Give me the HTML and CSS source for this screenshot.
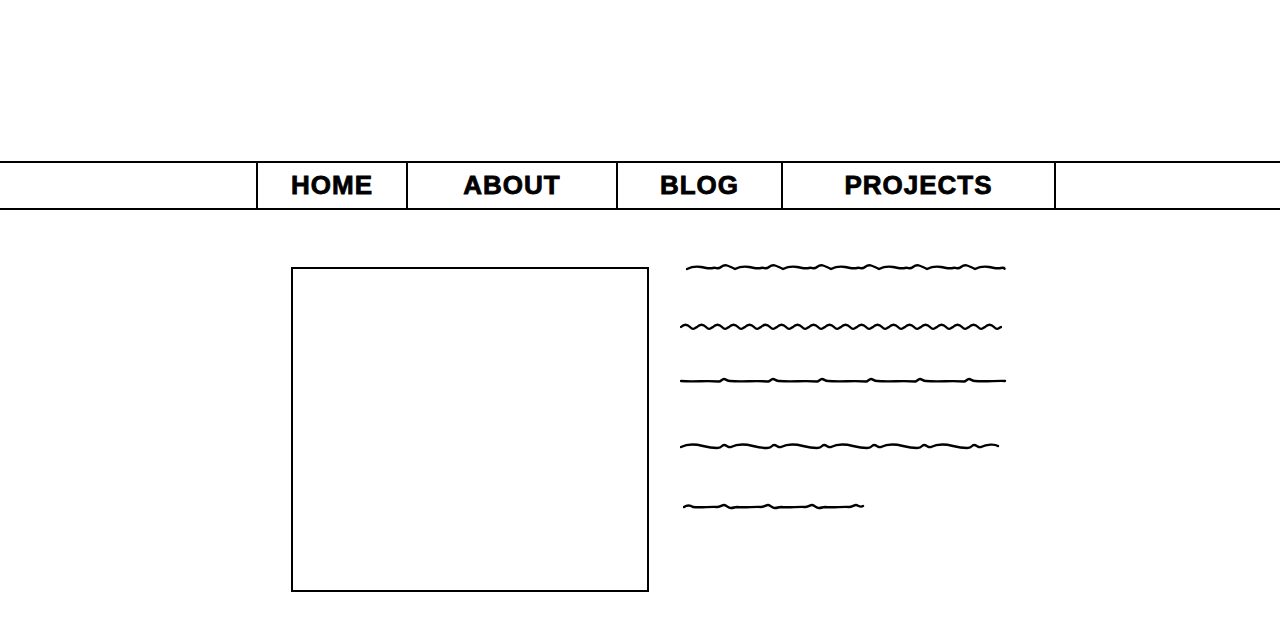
FILE: index.html
```html
<!DOCTYPE html>
<html lang="en">

<head>
    <meta charset="UTF-8">
    <meta name="viewport" content="width=device-width, initial-scale=1.0">
    <title>Wireframe</title>
    <link rel="stylesheet" href="styles.css">
</head>

<body>
    <nav class="navbar">
        <ul class="nav-list">
            <li class="nav-item home">HOME</li>
            <li class="nav-item about">ABOUT</li>
            <li class="nav-item blog">BLOG</li>
            <li class="nav-item projects">PROJECTS</li>
        </ul>
    </nav>

    <main class="content">
        <div class="image-box"></div>

        <!-- placeholder text, drawn as hand-made squiggles -->
        <div class="text-lines">
            <svg class="squiggle line-1" width="320" height="10" viewBox="0 0 320 10">
                <path d="M1 5 c4 -2 8 -3 14 -2 s8 2 12 1 s4 2 8 -1 s6 -2 14 2 c4 -2 8 -3 14 -2 s8 2 12 1 s4 2 8 -1 s6 -2 14 2 c4 -2 8 -3 14 -2 s8 2 12 1 s4 2 8 -1 s6 -2 14 2 c4 -2 8 -3 14 -2 s8 2 12 1 s4 2 8 -1 s6 -2 14 2 c4 -2 8 -3 14 -2 s8 2 12 1 s4 2 8 -1 s6 -2 14 2 c4 -2 8 -3 14 -2 s8 2 12 1 s4 2 8 -1 s6 -2 14 2 c4 -2 8 -3 14 -2 s8 2 12 1 s4 2 3 0" />
            </svg>
            <svg class="squiggle line-2" width="322" height="10" viewBox="0 0 322 10">
                <path d="M1 5 c3 -3 6 -3 9 0 s4 2 7 0 c3 -3 6 -3 9 0 s4 2 7 0 c3 -3 6 -3 9 0 s4 2 7 0 c3 -3 6 -3 9 0 s4 2 7 0 c3 -3 6 -3 9 0 s4 2 7 0 c3 -3 6 -3 9 0 s4 2 7 0 c3 -3 6 -3 9 0 s4 2 7 0 c3 -3 6 -3 9 0 s4 2 7 0 c3 -3 6 -3 9 0 s4 2 7 0 c3 -3 6 -3 9 0 s4 2 7 0 c3 -3 6 -3 9 0 s4 2 7 0 c3 -3 6 -3 9 0 s4 2 7 0 c3 -3 6 -3 9 0 s4 2 7 0 c3 -3 6 -3 9 0 s4 2 7 0 c3 -3 6 -3 9 0 s4 2 7 0 c3 -3 6 -3 9 0 s4 2 7 0 c3 -3 6 -3 9 0 s4 2 7 0 c3 -3 6 -3 9 0 s4 2 7 0 c3 -3 6 -3 9 0 s4 2 7 0 c3 -3 6 -3 9 0 s4 2 7 0" />
            </svg>
            <svg class="squiggle line-3" width="327" height="10" viewBox="0 0 327 10">
                <path d="M1 5 c12 1 26 -0.5 38 0.5 c2 0 3 -2.5 5 -2.5 s3 2 6 2 c12 1 26 -0.5 38 0.5 c2 0 3 -2.5 5 -2.5 s3 2 6 2 c12 1 26 -0.5 38 0.5 c2 0 3 -2.5 5 -2.5 s3 2 6 2 c12 1 26 -0.5 38 0.5 c2 0 3 -2.5 5 -2.5 s3 2 6 2 c12 1 26 -0.5 38 0.5 c2 0 3 -2.5 5 -2.5 s3 2 6 2 c12 1 26 -0.5 38 0.5 c2 0 3 -2.5 5 -2.5 s3 2 6 2 c10 1 22 -0.5 30 0" />
            </svg>
            <svg class="squiggle line-4" width="320" height="10" viewBox="0 0 320 10">
                <path d="M1 5 c6 -3 14 -3 22 -1 s8 2 14 2 s4 -3 7 -3 s4 3 7 2 c6 -3 14 -3 22 -1 s8 2 14 2 s4 -3 7 -3 s4 3 7 2 c6 -3 14 -3 22 -1 s8 2 14 2 s4 -3 7 -3 s4 3 7 2 c6 -3 14 -3 22 -1 s8 2 14 2 s4 -3 7 -3 s4 3 7 2 c6 -3 14 -3 22 -1 s8 2 14 2 s4 -3 7 -3 s4 3 7 2 c6 -3 14 -3 22 -1 s8 2 14 2 s4 -3 7 -3 s4 3 7 2 c6 -3 14 -3 17 -1" />
            </svg>
            <svg class="squiggle line-5" width="184" height="10" viewBox="0 0 184 10">
                <path d="M1 5 c3 -2 6 -2 9 0 c8 1 16 -0.5 24 0 c3 0 5 -2 7 -2 s4 3 7 3 s3 -1 6 -1 c8 1 16 -0.5 24 0 c3 0 5 -2 7 -2 s4 3 7 3 s3 -1 6 -1 c8 1 16 -0.5 24 0 c3 0 5 -2 7 -2 s4 3 7 3 s3 -1 6 -1 c8 1 16 -0.5 24 0 c3 0 5 -2 7 -2 s4 3 7 1" />
            </svg>
        </div>
    </main>
</body>

</html>
```

FILE: styles.css
```css
body {
    margin: 0;
    background-color: #fff;
    color: #000;
    font-family: 'Liberation Sans', Arial, sans-serif;
}

.navbar {
    margin-top: 161px;
    border-top: 2px solid #000;
    border-bottom: 2px solid #000;
}

.nav-list {
    display: flex;
    margin: 0 0 0 256px;
    padding: 0;
    list-style: none;
}

.nav-item {
    display: flex;
    align-items: center;
    justify-content: center;
    height: 45px;
    border-left: 2px solid #000;
    font-size: 26px;
    font-weight: bold;
    letter-spacing: 1px;
    -webkit-text-stroke: 0.8px #000;
}

.nav-item.home {
    width: 148px;
}

.nav-item.about {
    width: 208px;
}

.nav-item.blog {
    width: 163px;
}

.nav-item.projects {
    width: 271px;
    border-right: 2px solid #000;
}

.content {
    display: flex;
    align-items: flex-start;
    margin: 57px 0 0 291px;
}

.image-box {
    width: 354px;
    height: 321px;
    border: 2px solid #000;
}

.text-lines {
    display: flex;
    flex-direction: column;
    align-items: flex-start;
    margin: -3px 0 0 31px;
}

.squiggle path {
    fill: none;
    stroke: #000;
    stroke-width: 2.4;
    stroke-linecap: round;
    stroke-linejoin: round;
}

.line-1 {
    margin-left: 6px;
}

.line-2 {
    margin-top: 48px;
}

.line-3 {
    margin-top: 44px;
}

.line-4 {
    margin-top: 56px;
}

.line-5 {
    margin-top: 50px;
    margin-left: 3px;
}
```
